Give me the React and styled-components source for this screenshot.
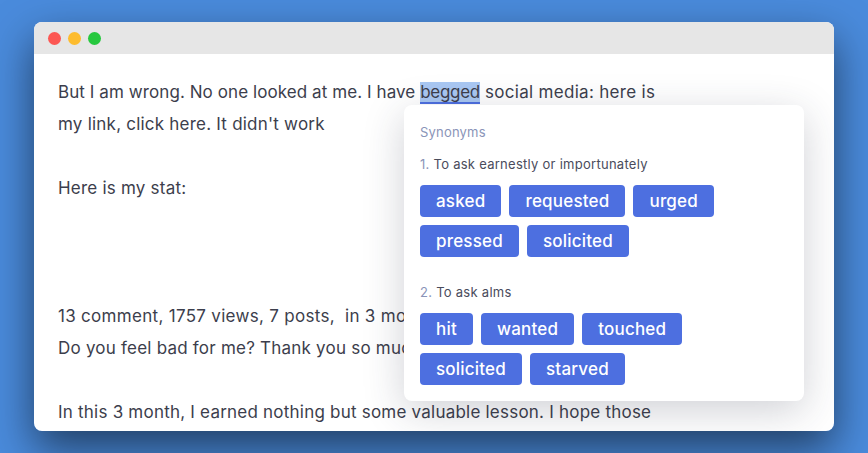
import React from "react";
import styled, { createGlobalStyle } from "styled-components";

const GlobalStyle = createGlobalStyle`
  html, body {
    margin: 0;
    padding: 0;
    height: 100%;
    overflow: hidden;
  }
  body {
    font-family: "Inter", "Liberation Sans", sans-serif;
  }
`;

const Page = styled.div`
  width: 868px;
  height: 453px;
  box-sizing: border-box;
  padding: 22px 34px;
  background: #4a8bdc;
  overflow: hidden;
`;

const WindowShadow = styled.div`
  border-radius: 8px;
  box-shadow: 0 18px 44px rgba(0, 0, 0, 0.55);
`;

const Window = styled.div`
  position: relative;
  height: 409px;
  background: #fff;
  border-radius: 8px;
  overflow: hidden;
`;

const TitleBar = styled.div`
  display: flex;
  align-items: center;
  gap: 7px;
  height: 32px;
  padding: 0 14px;
  background: #e6e6e6;
`;

const Dot = styled.span`
  width: 13px;
  height: 13px;
  border-radius: 50%;
  background: ${({ color }) => color};
`;

const Body = styled.div`
  padding: 22px 24px 0;
  color: #3c3e4c;
  font-size: 17px;
  line-height: 32px;
  white-space: pre;
`;

const Line = styled.div`
  height: 32px;
  margin-top: ${({ $gap }) => $gap || 0}px;
  letter-spacing: ${({ $tracking }) => $tracking ?? 0.22}px;
`;

const Highlight = styled.span`
  background: #a9c8f3;
  border-bottom: 2px solid #4d6fe0;
  letter-spacing: -0.3px;
`;

const Tail = styled.span`
  letter-spacing: 0.3px;
`;

const Popover = styled.div`
  position: absolute;
  left: 370px;
  top: 83px;
  width: 400px;
  height: 296px;
  box-sizing: border-box;
  padding: 19px 16px 16px;
  background: #fff;
  border-radius: 8px;
  box-shadow: 0 10px 40px rgba(40, 44, 70, 0.22);
`;

const PopoverTitle = styled.div`
  color: #8a94b8;
  font-size: 13px;
  line-height: 16px;
  letter-spacing: 0.2px;
`;

const Group = styled.div`
  margin-top: ${({ $top }) => $top}px;
`;

const Meaning = styled.div`
  color: #4a4c5c;
  font-size: 13px;
  line-height: 16px;
  letter-spacing: 0.27px;
`;

const Index = styled.span`
  color: #8a94b8;
`;

const Chips = styled.div`
  display: flex;
  flex-direction: column;
  gap: 8px;
  margin-top: 13px;
`;

const ChipRow = styled.div`
  display: flex;
  gap: 8px;
`;

const Chip = styled.span`
  height: 32px;
  padding: 0 16px;
  border-radius: 4px;
  background: #4d6fe0;
  color: #fff;
  font-size: 17px;
  font-weight: 500;
  line-height: 32px;
  letter-spacing: 0.2px;
`;

const groups = [
  {
    meaning: "To ask earnestly or importunately",
    top: 16,
    rows: [
      ["asked", "requested", "urged"],
      ["pressed", "solicited"],
    ],
  },
  {
    meaning: "To ask alms",
    top: 27,
    rows: [
      ["hit", "wanted", "touched"],
      ["solicited", "starved"],
    ],
  },
];

const App = () => {
  return (
    <>
      <GlobalStyle />
      <Page>
        <WindowShadow>
          <Window>
            <TitleBar>
              <Dot color="#fc5753" />
              <Dot color="#fdbc2e" />
              <Dot color="#27c83f" />
            </TitleBar>
            <Body>
              <Line $tracking={0.08}>
                But I am wrong. No one looked at me. I have <Highlight>begged</Highlight>
                <Tail> social media: here is</Tail>
              </Line>
              <Line>my link, click here. It didn't work</Line>
              <Line $gap={32}>Here is my stat:</Line>
              <Line $gap={96} $tracking={0.3}>13 comment, 1757 views, 7 posts,  in 3 months</Line>
              <Line>Do you feel bad for me? Thank you so much</Line>
              <Line $gap={32}>In this 3 month, I earned nothing but some valuable lesson. I hope those</Line>
            </Body>
            <Popover>
              <PopoverTitle>Synonyms</PopoverTitle>
              {groups.map((group, i) => (
                <Group key={group.meaning} $top={group.top}>
                  <Meaning>
                    <Index>{i + 1}.</Index> {group.meaning}
                  </Meaning>
                  <Chips>
                    {group.rows.map((row) => (
                      <ChipRow key={row[0]}>
                        {row.map((word) => (
                          <Chip key={word}>{word}</Chip>
                        ))}
                      </ChipRow>
                    ))}
                  </Chips>
                </Group>
              ))}
            </Popover>
          </Window>
        </WindowShadow>
      </Page>
    </>
  );
};

export default App;
